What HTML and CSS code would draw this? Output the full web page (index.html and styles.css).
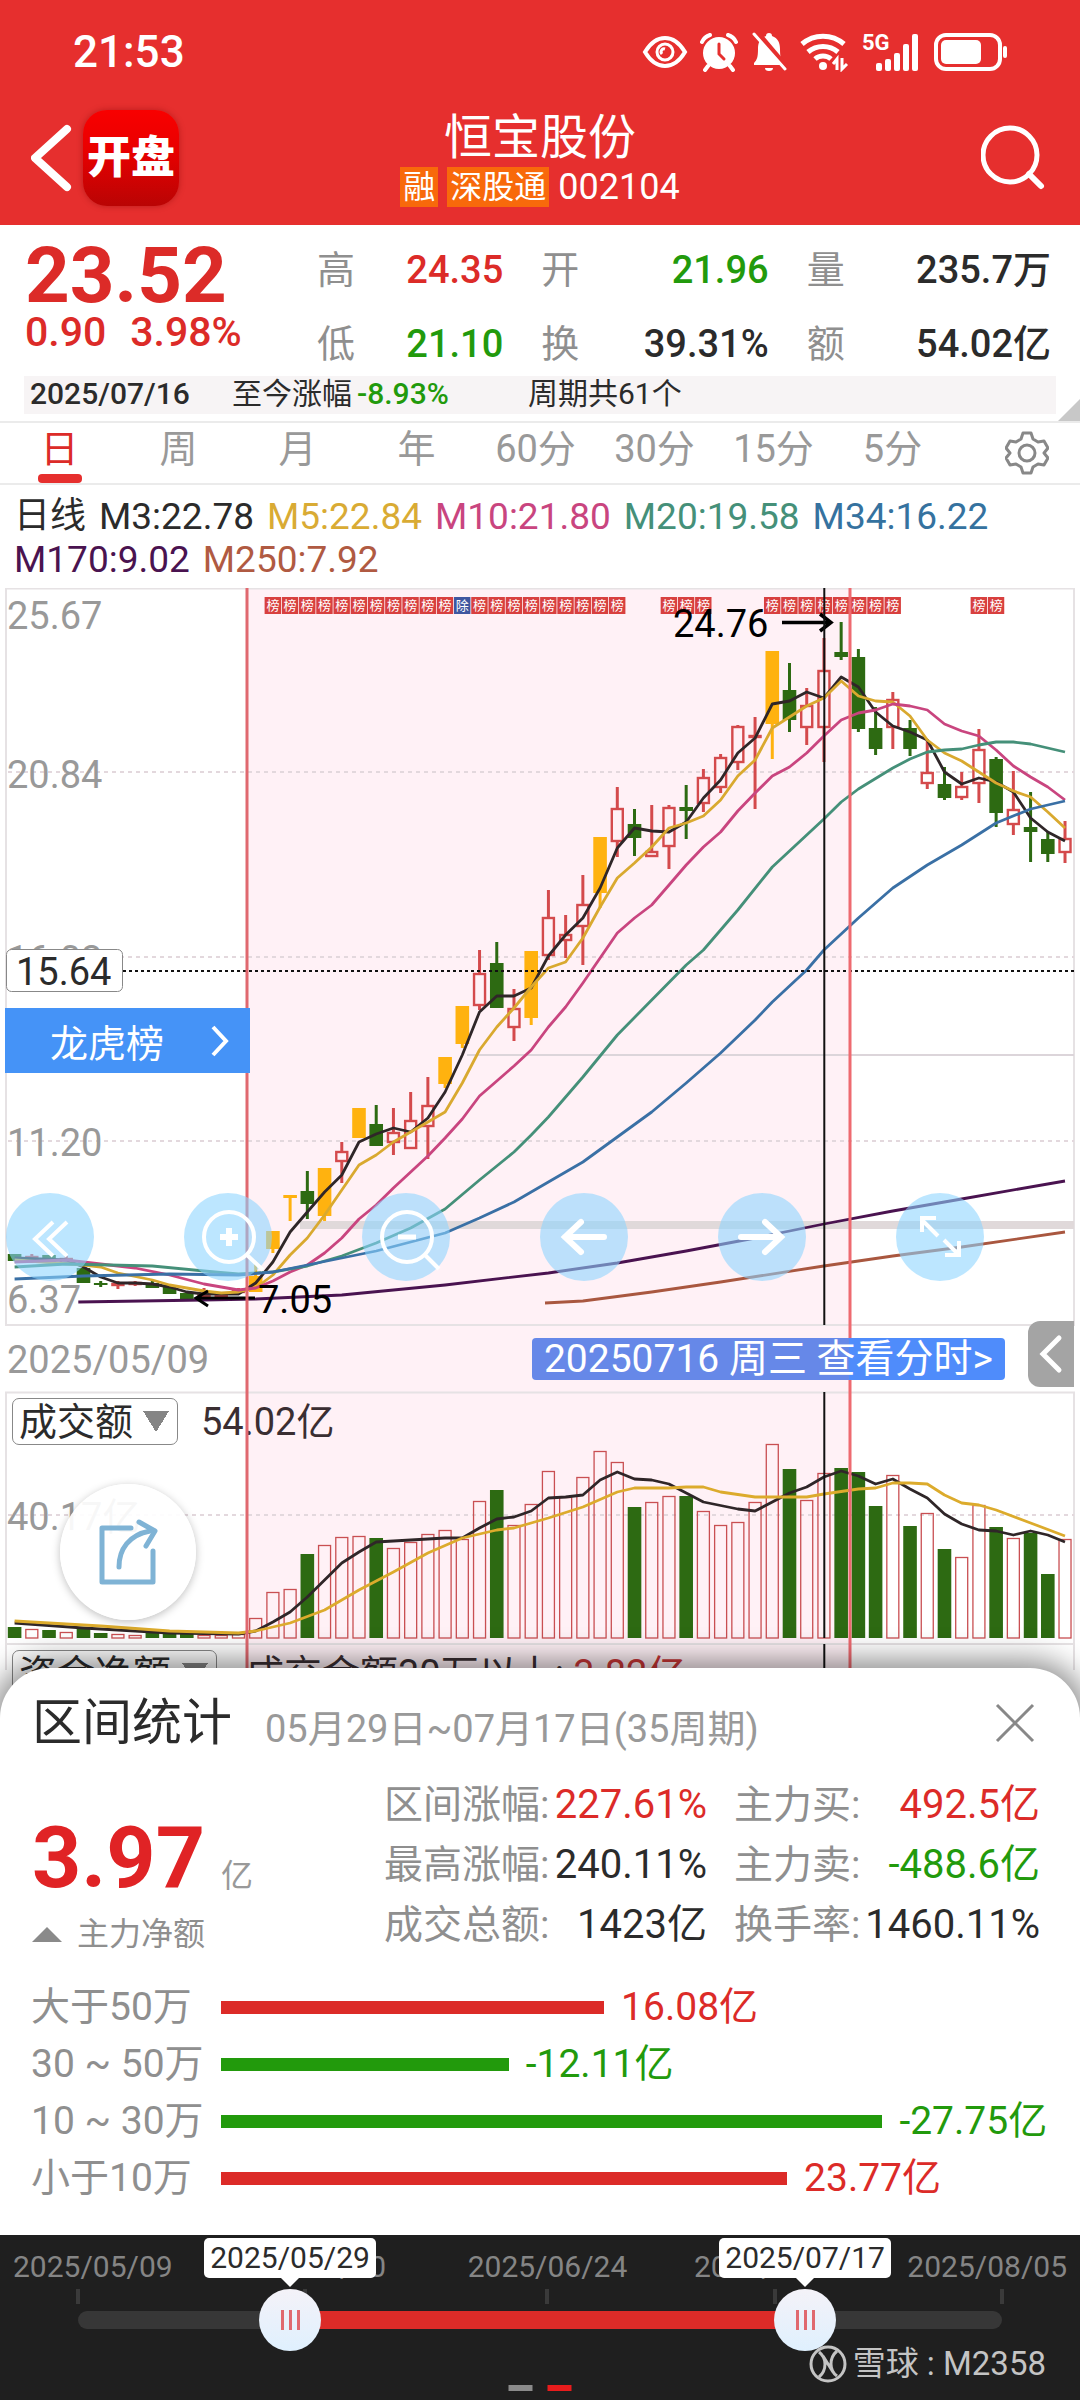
FILE: index.html
```
<!DOCTYPE html>
<html lang="zh-CN">
<head>
    <meta charset="UTF-8">
    <meta name="viewport" content="width=device-width, initial-scale=1.0">
    <title>恒宝股份 002104</title>
    <link rel="stylesheet" href="styles.css">
</head>
<body>

    <header class="header">
        <!-- Status bar -->
        <div class="status-bar">
            <span class="clock">21:53</span>
            <div class="status-icons">
                <svg width="46" height="40" viewBox="0 0 46 40" fill="none" stroke="#fff" stroke-width="4">
                    <path d="M3 20C9 10 16 6 23 6s14 4 20 14c-6 10-13 14-20 14S9 30 3 20z"/>
                    <circle cx="23" cy="20" r="8" stroke-width="3"/>
                    <path d="M23 17a3 3 0 0 0-3 5" stroke-width="3"/>
                </svg>
                <svg width="38" height="40" viewBox="0 0 38 40" fill="none" stroke="#fff" stroke-linecap="round">
                    <circle cx="19" cy="21" r="16" fill="#fff" stroke="none"/>
                    <path d="M2 10a13 13 0 0 1 8-7M36 10a13 13 0 0 0-8-7M8 34l-3 4M30 34l3 4" stroke-width="4"/>
                    <path d="M19 12v10l5 5" stroke="#e62f2e" stroke-width="3"/>
                </svg>
                <svg width="38" height="40" viewBox="0 0 38 40">
                    <path d="M19 1c2 0 3 1 3 3 6 2 8 7 8 13 0 8 1 11 4 14v2H4v-2c3-3 4-6 4-14 0-6 2-11 8-13 0-2 1-3 3-3z" fill="#fff"/>
                    <path d="M15 36h8a4 3 0 0 1-8 0z" fill="#fff"/>
                    <path d="M8 2l28 33" stroke="#e62f2e" stroke-width="6"/>
                    <path d="M4 2l31 35" stroke="#fff" stroke-width="3" stroke-linecap="round"/>
                </svg>
                <svg width="50" height="40" viewBox="0 0 50 40" fill="none" stroke="#fff" stroke-width="5">
                    <path d="M2 12a32 32 0 0 1 42 0M8 20a23 23 0 0 1 30 0M15 27a12 12 0 0 1 16 0"/>
                    <circle cx="23" cy="34" r="4" fill="#fff" stroke="none"/>
                    <path d="M37 38V27l-4 5M42 26v11l5-5" stroke-width="3"/>
                </svg>
                <svg class="signal" width="58" height="40" viewBox="0 0 58 40" fill="#fff">
                    <text class="net-label" x="0" y="18">5G</text>
                    <rect x="14" y="31" width="6" height="8" rx="2"/>
                    <rect x="23" y="27" width="6" height="12" rx="2"/>
                    <rect x="32" y="21" width="6" height="18" rx="2"/>
                    <rect x="41" y="12" width="6" height="27" rx="2"/>
                    <rect x="50" y="2" width="6" height="37" rx="2"/>
                </svg>
                <svg width="78" height="40" viewBox="0 0 78 40">
                    <rect x="4" y="3" width="64" height="34" rx="10" fill="none" stroke="#fff" stroke-width="4"/>
                    <rect x="9" y="8" width="40" height="24" rx="5" fill="#fff"/>
                    <rect x="71" y="14" width="4" height="12" rx="2" fill="#fff"/>
                </svg>
            </div>
        </div>

        <!-- Title bar -->
        <div class="nav-bar">
            <div class="nav-left">
                <button class="icon-btn" aria-label="返回">
                    <svg width="42" height="68" viewBox="4 0 42 68" fill="none" stroke="#fff" stroke-width="8" stroke-linecap="round" stroke-linejoin="round">
                        <path d="M40 5L8 34l32 29"/>
                    </svg>
                </button>
                <a href="#" class="app-logo">开盘</a>
            </div>
            <div class="nav-title">
                <h1>恒宝股份</h1>
                <p><span class="tag">融</span><span class="tag">深股通</span><span>002104</span></p>
            </div>
            <button class="icon-btn search-btn" aria-label="搜索">
                <svg width="66" height="68" viewBox="0 0 66 68" fill="none" stroke="#fff" stroke-width="5" stroke-linecap="round">
                    <circle cx="29" cy="31" r="27"/>
                    <path d="M48 50l12 12" stroke-width="6"/>
                </svg>
            </button>
        </div>
    </header>

    <!-- Quote -->
    <section class="quote">
        <div class="price-block">
            <div class="price">23.52</div>
            <div class="change"><span>0.90</span><span>3.98%</span></div>
        </div>
        <dl class="quote-grid">
            <div><dt>高</dt><dd class="up">24.35</dd></div>
            <div><dt>开</dt><dd class="down">21.96</dd></div>
            <div><dt>量</dt><dd>235.7万</dd></div>
            <div><dt>低</dt><dd class="down">21.10</dd></div>
            <div><dt>换</dt><dd>39.31%</dd></div>
            <div><dt>额</dt><dd>54.02亿</dd></div>
        </dl>
    </section>
    <div class="info-row">
        <div class="info-bar">
            <span class="info-date">2025/07/16</span>
            <span class="info-since">至今涨幅<b class="down">-8.93%</b></span>
            <span>周期共61个</span>
        </div>
        <i class="fold"></i>
    </div>

    <!-- Period tabs -->
    <nav class="tabs">
        <button class="tab active">日</button>
        <button class="tab">周</button>
        <button class="tab">月</button>
        <button class="tab">年</button>
        <button class="tab">60分</button>
        <button class="tab">30分</button>
        <button class="tab">15分</button>
        <button class="tab">5分</button>
        <button class="tab-settings" aria-label="设置">
            <svg width="44" height="44" viewBox="0 0 44 44" fill="none" stroke="#888" stroke-width="3" stroke-linejoin="round">
                <path d="M18 2h8l2 6 5 3 6-1 4 7-4 5 4 5-4 7-6-1-5 3-2 6h-8l-2-6-5-3-6 1-4-7 4-5-4-5 4-7 6 1 5-3z"/>
                <circle cx="22" cy="22" r="8"/>
            </svg>
        </button>
    </nav>

    <div class="ma-legend">
        <span class="ma-name">日线</span>
        <span class="ma3">M3:22.78</span>
        <span class="ma5">M5:22.84</span>
        <span class="ma10">M10:21.80</span>
        <span class="ma20">M20:19.58</span>
        <span class="ma34">M34:16.22</span>
        <span class="ma170">M170:9.02</span>
        <span class="ma250">M250:7.92</span>
    </div>

    <!-- Charts, the controls below float over them -->
    <section class="charts">
        <svg id="chart" class="chart-svg" viewBox="0 588 1080 1082"></svg>

        <a href="#" class="dragon-btn">
            <span>龙虎榜</span>
            <svg width="20" height="32" viewBox="0 0 20 32" fill="none" stroke="#fff" stroke-width="4"><path d="M3 2l13 14L3 30"/></svg>
        </a>

        <div class="tools">
            <button aria-label="更多"><svg viewBox="0 0 88 88"><path d="M47 29L29 46l18 17M61 29L43 46l18 17"/></svg></button>
            <button aria-label="放大"><svg viewBox="0 0 88 88"><circle cx="45" cy="44" r="25"/><path d="M63 62l16 15"/><path d="M36 44h18M45 35v18" stroke-width="6"/></svg></button>
            <button aria-label="缩小"><svg viewBox="0 0 88 88"><circle cx="45" cy="44" r="25"/><path d="M63 62l14 14"/><path d="M36 44h18" stroke-width="5"/></svg></button>
            <button aria-label="左移"><svg viewBox="0 0 88 88"><path class="bold" d="M64 44H25M41 29L25 44l16 15"/></svg></button>
            <button aria-label="右移"><svg viewBox="0 0 88 88"><path class="bold" d="M23 44h39M47 29l16 15-16 15"/></svg></button>
            <button aria-label="全屏"><svg viewBox="0 0 88 88"><path d="M42 43L26 27M26 39V25h14M48 47l14 14M49 62h14V48"/></svg></button>
        </div>

        <a href="#" class="minute-link">20250716 周三 查看分时&gt;</a>
        <button class="side-tab" aria-label="展开">
            <svg width="24" height="40" viewBox="0 0 24 40" fill="none" stroke="#fff" stroke-width="5" stroke-linecap="round"><path d="M20 4L4 20l16 16"/></svg>
        </button>

        <select class="indicator indicator-volume" aria-label="指标一"><option>成交额</option></select>
        <select class="indicator indicator-flow" aria-label="指标二"><option>资金净额</option></select>

        <button class="share-btn" aria-label="分享">
            <svg width="68" height="68" viewBox="0 0 68 68" fill="none" stroke="#7fb3d5" stroke-width="5" stroke-linecap="round" stroke-linejoin="round">
                <path d="M37 10H8v54h51V33"/>
                <path d="M25 49c0-18 10-32 31-36"/>
                <path d="M45 4l16 9-9 15"/>
            </svg>
        </button>
    </section>

    <!-- Range statistics sheet -->
    <section class="sheet">
        <div class="sheet-head">
            <h2>区间统计</h2>
            <span class="sheet-range">05月29日~07月17日(35周期)</span>
            <button class="icon-btn" aria-label="关闭">
                <svg width="40" height="40" viewBox="0 0 40 40" stroke="#888" stroke-width="3"><path d="M2 2l36 36M38 2L2 38"/></svg>
            </button>
        </div>

        <div class="summary">
            <div class="net">
                <div class="net-value"><strong>3.97</strong><span>亿</span></div>
                <div class="net-label-row"><i class="triangle"></i>主力净额</div>
            </div>
            <dl class="stats">
                <div><dt>区间涨幅:</dt><dd class="up">227.61%</dd></div>
                <div><dt>主力买:</dt><dd class="up">492.5亿</dd></div>
                <div><dt>最高涨幅:</dt><dd>240.11%</dd></div>
                <div><dt>主力卖:</dt><dd class="down">-488.6亿</dd></div>
                <div><dt>成交总额:</dt><dd>1423亿</dd></div>
                <div><dt>换手率:</dt><dd>1460.11%</dd></div>
            </dl>
        </div>

        <ul class="bars">
            <li><span class="bar-label">大于50万</span><div class="bar-row up"><i class="bar" style="width: 44.6%"></i>16.08亿</div></li>
            <li><span class="bar-label">30 ~ 50万</span><div class="bar-row down"><i class="bar" style="width: 33.5%"></i>-12.11亿</div></li>
            <li><span class="bar-label">10 ~ 30万</span><div class="bar-row down"><i class="bar" style="width: 77%"></i>-27.75亿</div></li>
            <li><span class="bar-label">小于10万</span><div class="bar-row up"><i class="bar" style="width: 65.9%"></i>23.77亿</div></li>
        </ul>
    </section>

    <!-- Range picker -->
    <footer class="picker">
        <div class="scale">
            <span>2025/05/09</span>
            <span>2025/05/30</span>
            <span>2025/06/24</span>
            <span>2025/07/15</span>
            <span>2025/08/05</span>
        </div>
        <div class="slider">
            <i class="tick" style="left: 0%"></i>
            <i class="tick" style="left: 24.6%"></i>
            <i class="tick" style="left: 50.8%"></i>
            <i class="tick" style="left: 75.4%"></i>
            <i class="tick" style="left: 100%"></i>
            <div class="track"><div class="fill" style="left: 22.95%; right: 21.31%"></div></div>
            <input type="range" min="0" max="61" value="14" aria-label="开始日期">
            <input type="range" min="0" max="61" value="48" aria-label="结束日期">
            <output class="tip" style="left: 22.95%">2025/05/29</output>
            <output class="tip" style="left: 78.69%">2025/07/17</output>
        </div>
        <div class="pager"><i></i><i class="current"></i></div>
        <div class="watermark">
            <svg width="40" height="40" viewBox="0 0 40 40" fill="none" stroke="#c4c4c4" stroke-width="3">
                <circle cx="20" cy="20" r="17"/>
                <path d="M11 8c8 6 8 18 0 25M29 7c-8 7-8 19 0 25M15 12l10 16"/>
            </svg>
            <span>雪球 : M2358</span>
        </div>
    </footer>

    <script src="chart.js"></script>
</body>
</html>
```
FILE: styles.css
```
:root {
    --red: #dc2b28;
    --header-red: #e62f2e;
    --green: #229a0c;
    --text: #2b2b2b;
    --muted: #8f8f8f;
    --line: #ebebeb;
    --font-family: Roboto, "Noto Sans CJK SC", sans-serif;
}

* {
    margin: 0;
    padding: 0;
    box-sizing: border-box;
}

body {
    background-color: #fff;
    color: var(--text);
    font-family: var(--font-family);
    font-size: 38px;
}

button,
select,
input {
    font: inherit;
    color: inherit;
    border: none;
    background: none;
    cursor: pointer;
}

a {
    text-decoration: none;
}

svg {
    display: block;
}

ul {
    list-style: none;
}

.up {
    color: var(--red);
}

.down {
    color: var(--green);
}

/* Header */
.header {
    background-color: var(--header-red);
    color: #fff;
}

.status-bar {
    display: flex;
    justify-content: space-between;
    align-items: center;
    height: 88px;
    padding: 16px 70px 0 73px;
}

.clock {
    font-size: 44px;
    font-weight: 500;
}

.status-icons {
    display: flex;
    align-items: center;
    gap: 12px;
}

.signal {
    overflow: visible;
}

.net-label {
    font-size: 22px;
    font-weight: 700;
}

.nav-bar {
    display: grid;
    grid-template-columns: 1fr auto 1fr;
    align-items: center;
    height: 137px;
    padding: 2px 33px 0;
}

.nav-left {
    display: flex;
    align-items: center;
    gap: 10px;
}

.nav-left .icon-btn {
    margin-left: -2px;
}

.app-logo {
    width: 96px;
    height: 96px;
    border-radius: 24px;
    background: linear-gradient(#f80000, #ea0000 40%, #b90404);
    box-shadow: 0 0 6px rgba(120, 0, 0, 0.4);
    color: #fff;
    font-size: 44px;
    font-weight: 900;
    line-height: 96px;
    text-align: center;
    white-space: nowrap;
}

.nav-title {
    text-align: center;
}

.nav-title h1 {
    font-size: 48px;
    font-weight: 400;
    line-height: 58px;
}

.nav-title p {
    display: flex;
    justify-content: center;
    align-items: center;
    gap: 9px;
    font-size: 36px;
    line-height: 40px;
}

.tag {
    padding: 0 3px;
    background-color: #f8690b;
    font-size: 32px;
}

.search-btn {
    justify-self: end;
}

/* Quote */
.quote {
    display: flex;
    padding: 0 29px 0 25px;
}

.price-block {
    width: 292px;
    flex: none;
    padding-top: 15px;
    color: var(--red);
}

.price {
    font-size: 78px;
    font-weight: 700;
    line-height: 72px;
}

.change {
    display: flex;
    gap: 24px;
    font-size: 41px;
    font-weight: 500;
    line-height: 40px;
}

.quote-grid {
    flex: 1;
    display: grid;
    grid-template-columns: 186fr 227fr 244fr;
    gap: 34px 38px;
    padding: 25px 0 12px;
}

.quote-grid div {
    display: flex;
    justify-content: space-between;
    line-height: 40px;
}

.quote-grid dt {
    color: var(--muted);
}

.quote-grid dd {
    font-weight: 500;
}

.info-row {
    position: relative;
    padding: 0 24px 7px;
    border-bottom: 2px solid var(--line);
}

.info-bar {
    display: flex;
    padding: 0 0 2px 6px;
    background-color: #f7f4f5;
    font-size: 30px;
    line-height: 36px;
}

.info-date {
    width: 202px;
    font-weight: 500;
}

.info-since {
    width: 296px;
}

.info-since b {
    padding-left: 5px;
    font-weight: 500;
}

.fold {
    position: absolute;
    right: 0;
    bottom: 0;
    border-left: 22px solid transparent;
    border-bottom: 22px solid #c8c8c8;
}

/* Tabs */
.tabs {
    display: grid;
    grid-template-columns: repeat(8, 119fr) 128fr;
    border-bottom: 2px solid var(--line);
}

.tab {
    position: relative;
    height: 60px;
    padding-bottom: 8px;
    color: #999;
    line-height: 50px;
}

.tab.active {
    color: var(--red);
}

.tab.active::after {
    content: '';
    position: absolute;
    left: 50%;
    bottom: 0;
    width: 44px;
    height: 9px;
    margin-left: -22px;
    border-radius: 4px;
    background-color: var(--header-red);
}

.tab-settings {
    display: flex;
    justify-content: center;
    align-items: center;
    padding-left: 22px;
}

/* Moving averages */
.ma-legend {
    display: flex;
    flex-wrap: wrap;
    column-gap: 13px;
    padding: 10px 14px 7px;
    font-size: 37px;
    line-height: 43px;
}

.ma-name { font-size: 36px; }
.ma5 { color: #d9ab34; }
.ma10 { color: #c9457f; }
.ma20 { color: #459079; }
.ma34 { color: #35729f; }
.ma170 { color: #4a1350; }
.ma250 { color: #b05a42; }

/* Charts */
.charts {
    position: relative;
}

.chart-svg {
    width: 100%;
    height: auto;
}

.chart-svg text {
    font-size: 38px;
}

.chart-svg .axis {
    fill: #999;
}

.chart-svg .badge {
    font-size: 13px;
    fill: #fff;
    text-anchor: middle;
}

.dragon-btn {
    position: absolute;
    top: 420px;
    left: 5px;
    display: flex;
    justify-content: space-between;
    align-items: center;
    width: 245px;
    height: 65px;
    padding: 0 20px 0 45px;
    background-color: #4593f7;
    color: #fff;
}

.tools {
    position: absolute;
    top: 605px;
    left: 6px;
    right: 96px;
    display: flex;
    justify-content: space-between;
}

.tools button {
    width: 88px;
    height: 88px;
    border-radius: 50%;
    background-color: rgba(140, 212, 255, 0.58);
}

.tools svg {
    fill: none;
    stroke: #fff;
    stroke-width: 4;
}

.tools .bold {
    stroke-width: 6;
    stroke-linecap: round;
}

/* Tinted up to the right edge of the selected range */
.minute-link {
    position: absolute;
    top: 750px;
    right: 75px;
    padding: 0 12px;
    border-radius: 4px;
    background: linear-gradient(90deg, #6688e8 67%, #4f8cfb 67%);
    color: #fff;
    font-size: 39px;
    line-height: 42px;
    white-space: nowrap;
}

.side-tab {
    position: absolute;
    top: 733px;
    right: 6px;
    display: flex;
    justify-content: center;
    align-items: center;
    width: 46px;
    height: 66px;
    border-radius: 12px 0 0 12px;
    background-color: #a4a4a4;
}

/* The two gradients are the halves of the down marker */
.indicator {
    position: absolute;
    left: 12px;
    height: 47px;
    padding-left: 6px;
    border: 1px solid #888;
    border-radius: 7px;
    appearance: none;
    background-image: linear-gradient(to top right, transparent 50%, #858585 50%), linear-gradient(to top left, transparent 50%, #858585 50%);
    background-repeat: no-repeat;
    background-size: 13px 21px;
    background-position: right 21px center, right 8px center;
    line-height: 44px;
}

.indicator-volume {
    top: 810px;
    width: 166px;
}

.indicator-flow {
    top: 1062px;
    width: 205px;
}

.share-btn {
    position: absolute;
    top: 896px;
    left: 60px;
    display: flex;
    justify-content: center;
    align-items: center;
    width: 136px;
    height: 136px;
    border-radius: 50%;
    background-color: rgba(255, 255, 255, 0.92);
    box-shadow: 0 2px 8px rgba(0, 0, 0, 0.25);
}

/* Sheet */
.sheet {
    position: relative;
    margin-top: -2px;
    padding: 23px 0 28px;
    border-radius: 50px 50px 0 0;
    background-color: #fff;
    box-shadow: 0 0 30px 8px rgba(0, 0, 0, 0.45);
}

.sheet-head {
    display: flex;
    align-items: center;
    height: 64px;
    padding: 0 45px 0 32px;
}

.sheet-head h2 {
    font-size: 50px;
    font-weight: 400;
    line-height: 60px;
}

.sheet-range {
    flex: 1;
    padding: 12px 0 0 33px;
    color: #999;
    line-height: 44px;
}

.summary {
    display: flex;
    justify-content: space-between;
    padding: 20px 40px 0 32px;
}

.net-value {
    display: flex;
    align-items: baseline;
    gap: 16px;
    padding-top: 45px;
    line-height: 76px;
}

.net-value strong {
    color: #e02325;
    font-size: 86px;
}

.net-value span {
    color: #999;
    font-size: 32px;
}

.net-label-row {
    display: flex;
    align-items: center;
    gap: 15px;
    color: var(--muted);
    font-size: 32px;
    line-height: 40px;
}

.triangle {
    border: 15px solid transparent;
    border-top: none;
    border-bottom-color: #8a8a8a;
}

.stats {
    display: grid;
    grid-template-columns: 323px 306px;
    column-gap: 27px;
    align-content: start;
}

.stats div {
    display: flex;
    justify-content: space-between;
    line-height: 60px;
}

.stats dt {
    color: var(--muted);
    font-size: 39px;
}

.stats dd {
    font-size: 40px;
}

.bars {
    padding: 24px 0 0 31px;
    font-size: 39px;
    line-height: 57px;
}

.bars li {
    display: flex;
    white-space: nowrap;
}

.bar-label {
    width: 190px;
    flex: none;
    color: var(--muted);
}

.bar-row {
    flex: 1;
    display: flex;
    align-items: center;
    gap: 17px;
}

.bar {
    flex: none;
    height: 13px;
    background-color: currentColor;
}

/* Picker */
.picker {
    position: relative;
    height: 165px;
    background-color: #1f1f1f;
}

.scale {
    display: grid;
    grid-template-columns: 214fr 242fr 227fr 214fr auto;
    padding: 12px 13px 0;
    color: #858585;
    font-size: 30px;
    line-height: 40px;
}

.slider {
    position: relative;
    height: 66px;
    margin: 0 78px;
}

.tick {
    position: absolute;
    top: 2px;
    width: 4px;
    height: 15px;
    margin-left: -2px;
    background-color: #3a3a3a;
}

.track {
    position: absolute;
    top: 24px;
    left: 0;
    right: 0;
    height: 18px;
    border-radius: 9px;
    background-color: #373737;
}

.fill {
    position: absolute;
    top: 0;
    bottom: 0;
    background-color: var(--red);
}

.slider input {
    position: absolute;
    top: 2px;
    left: -31px;
    width: calc(100% + 62px);
    height: 62px;
    appearance: none;
    pointer-events: none;
}

.slider input::-webkit-slider-thumb {
    width: 62px;
    height: 62px;
    border-radius: 50%;
    appearance: none;
    pointer-events: auto;
    background:
        linear-gradient(90deg, #e0696f 3px, transparent 3px 8px, #e0696f 8px 11px, transparent 11px 16px, #e0696f 16px) no-repeat center / 19px 20px,
        linear-gradient(#f4f2f8, #dff0fe);
}

.tip {
    position: absolute;
    top: -49px;
    width: 172px;
    margin-left: -86px;
    border-radius: 5px;
    background-color: #fff;
    color: #2b2b2b;
    font-size: 30px;
    line-height: 40px;
    text-align: center;
}

.tip::after {
    content: '';
    position: absolute;
    top: 100%;
    left: 50%;
    margin-left: -9px;
    border: 9px solid transparent;
    border-top-color: #fff;
    border-bottom: none;
}

.pager {
    position: absolute;
    bottom: 9px;
    left: 50%;
    display: flex;
    gap: 15px;
    transform: translateX(-50%);
}

.pager i {
    width: 24px;
    height: 6px;
    background-color: #8a8a8a;
}

.pager .current {
    background-color: #e81c1c;
}

.watermark {
    position: absolute;
    right: 34px;
    bottom: 16px;
    display: flex;
    align-items: center;
    gap: 5px;
    color: #c4c4c4;
    font-size: 33px;
    line-height: 40px;
}
```
FILE: chart.js
```
// Column centres: 62 periods across the plot
const STEP = 17.22;
const cx = i => 14.6 + STEP * i;

// [kind, high, bodyTop, bodyBottom, low, volumeTop]  r = rise, g = fall, y = limit up
const periods = [
    ['g', 1254, 1254, 1261, 1261, 1627], ['r', 1254, 1256, 1261, 1263, 1629],
    ['g', 1255, 1255, 1262, 1262, 1630], ['r', 1256, 1258, 1264, 1265, 1632],
    ['g', 1268, 1268, 1283, 1283, 1629], ['g', 1281, 1283, 1285, 1287, 1633],
    ['r', 1281, 1283, 1285, 1289, 1634], ['r', 1281, 1282, 1284, 1286, 1635],
    ['g', 1280, 1283, 1288, 1288, 1632], ['g', 1287, 1287, 1294, 1294, 1633],
    ['g', 1293, 1293, 1300, 1300, 1634], ['r', 1288, 1294, 1296, 1298, 1635],
    ['r', 1293, 1294, 1297, 1297, 1635], ['r', 1288, 1289, 1293, 1294, 1634],
    ['y', 1263, 1276, 1292, 1292, 1618], ['y', 1231, 1231, 1249, 1253, 1592],
    ['y', 1195, 1195, 1198, 1221, 1589], ['g', 1171, 1191, 1204, 1219, 1554],
    ['y', 1168, 1168, 1216, 1221, 1545], ['r', 1142, 1151, 1162, 1183, 1537],
    ['y', 1108, 1108, 1138, 1138, 1536], ['g', 1105, 1124, 1146, 1146, 1538],
    ['r', 1108, 1132, 1143, 1155, 1548], ['r', 1092, 1120, 1149, 1149, 1542],
    ['r', 1077, 1105, 1127, 1159, 1534], ['y', 1057, 1057, 1084, 1088, 1530],
    ['y', 1006, 1006, 1044, 1048, 1539], ['r', 950, 973, 1006, 1010, 1501],
    ['g', 942, 963, 1008, 1008, 1490], ['r', 989, 1008, 1028, 1041, 1525],
    ['y', 951, 951, 1018, 1025, 1504], ['r', 890, 917, 956, 960, 1471],
    ['r', 915, 934, 941, 958, 1497], ['r', 875, 904, 927, 965, 1477],
    ['y', 837, 837, 893, 908, 1451], ['r', 787, 808, 842, 857, 1462],
    ['g', 809, 824, 838, 856, 1507], ['r', 805, 851, 857, 857, 1502],
    ['r', 805, 807, 847, 869, 1496], ['g', 785, 807, 811, 839, 1496],
    ['r', 769, 777, 804, 812, 1511], ['r', 754, 757, 788, 793, 1525],
    ['r', 725, 726, 763, 770, 1522], ['r', 717, 735, 738, 809, 1502],
    ['y', 651, 651, 724, 759, 1444], ['g', 663, 690, 720, 732, 1469],
    ['r', 688, 705, 728, 745, 1500], ['r', 638, 670, 728, 762, 1473],
    ['g', 622, 652, 657, 660, 1468], ['g', 649, 657, 729, 732, 1472],
    ['g', 707, 728, 749, 755, 1506], ['r', 692, 699, 728, 749, 1475],
    ['g', 720, 728, 749, 756, 1526], ['r', 740, 772, 784, 789, 1513],
    ['g', 767, 784, 798, 800, 1549], ['r', 772, 786, 798, 800, 1557],
    ['r', 729, 749, 784, 803, 1505], ['g', 757, 759, 813, 827, 1527],
    ['r', 771, 809, 825, 835, 1538], ['g', 792, 827, 832, 862, 1533],
    ['g', 832, 839, 854, 862, 1574], ['r', 821, 838, 853, 863, 1539]
];

// Moving averages as index, y pairs
const averages = [
    ['#4a1350', [3.7, 1302, 11, 1300, 14, 1299, 19, 1295, 25, 1285, 31, 1273, 35, 1263, 39, 1251, 43, 1238, 47, 1224, 51, 1211, 55, 1199, 61, 1181]],
    ['#a9573f', [30.8, 1303, 33, 1301, 37, 1292, 41, 1282, 47, 1266, 51, 1256, 55, 1247, 61, 1232]],
    ['#2f2628', [0, 1258, 3, 1260, 4, 1267, 5, 1277, 6, 1283, 7, 1283, 8, 1284, 9, 1287, 10, 1292, 11, 1294, 13, 1294, 14, 1283, 15, 1262, 16, 1232, 17, 1212, 18, 1192, 19, 1175, 20, 1142, 21, 1134, 22, 1128, 23, 1132, 24, 1118, 25, 1092, 26, 1055, 27, 1012, 28, 996, 29, 996, 30, 988, 31, 956, 32, 935, 33, 918, 34, 888, 35, 848, 36, 828, 37, 831, 38, 832, 39, 822, 40, 798, 41, 780, 42, 753, 43, 738, 44, 704, 45, 701, 46, 692, 47, 698, 48, 677, 49, 687, 50, 712, 51, 726, 52, 732, 53, 740, 54, 772, 55, 784, 56, 778, 57, 782, 58, 792, 59, 818, 60, 832, 61, 841]],
    ['#d9a92f', [0, 1260, 4, 1265, 5, 1267, 6, 1273, 8, 1280, 9, 1285, 11, 1291, 12, 1293, 13, 1292, 14, 1288, 15, 1275, 16, 1255, 17, 1238, 18, 1215, 19, 1190, 20, 1165, 21, 1155, 22, 1142, 23, 1132, 24, 1122, 25, 1112, 26, 1083, 27, 1050, 28, 1027, 29, 1008, 30, 987, 31, 968, 32, 962, 33, 938, 34, 907, 35, 878, 36, 863, 37, 847, 38, 828, 39, 823, 40, 816, 41, 800, 42, 776, 43, 760, 44, 728, 45, 717, 46, 706, 47, 698, 48, 681, 49, 696, 50, 701, 51, 702, 52, 716, 53, 740, 54, 753, 55, 761, 56, 772, 57, 783, 58, 791, 59, 797, 60, 812, 61, 828]],
    ['#c9457f', [0, 1262, 3, 1260, 5, 1264, 7, 1268, 9, 1275, 11, 1284, 13, 1290, 14, 1288, 15, 1281, 16, 1272, 17, 1265, 18, 1253, 19, 1238, 20, 1219, 21, 1205, 22, 1188, 23, 1172, 24, 1156, 25, 1138, 26, 1119, 27, 1096, 28, 1081, 29, 1066, 30, 1050, 31, 1027, 32, 1007, 33, 983, 34, 958, 35, 933, 36, 918, 37, 905, 38, 885, 39, 865, 40, 847, 41, 832, 42, 811, 43, 793, 44, 776, 45, 767, 46, 753, 47, 736, 48, 720, 49, 713, 50, 710, 51, 704, 52, 706, 53, 710, 54, 724, 55, 731, 56, 736, 57, 750, 58, 766, 59, 777, 60, 787, 61, 800]],
    ['#459079', [0, 1267, 3, 1264, 8, 1266, 11, 1271, 13, 1274, 15, 1272, 17, 1266, 19, 1256, 21, 1243, 23, 1228, 25, 1209, 27, 1180, 28, 1166, 29, 1152, 30, 1135, 31, 1117, 33, 1077, 35, 1035, 37, 1000, 39, 965, 40, 950, 42, 910, 44, 867, 46, 835, 47, 819, 48, 802, 49, 789, 51, 768, 52, 759, 53, 752, 54, 750, 55, 749, 56, 745, 57, 742, 58, 742, 59, 744, 60, 748, 61, 752]],
    ['#3a70a5', [0, 1279, 4, 1276, 9, 1274, 13, 1275, 15, 1272, 17, 1265, 19, 1258, 21, 1251, 23, 1242, 25, 1233, 27, 1218, 29, 1202, 30, 1192, 31, 1182, 33, 1162, 35, 1137, 37, 1112, 39, 1083, 41, 1053, 43, 1020, 44, 1002, 46, 970, 47, 950, 49, 918, 51, 888, 53, 865, 55, 845, 57, 823, 59, 809, 61, 801]],
    // volume averages
    ['#2f2628', [0, 1623, 4, 1628, 9, 1633, 13, 1634, 14, 1631, 15, 1622, 16, 1612, 17, 1597, 18, 1580, 19, 1563, 20, 1552, 21, 1542, 23, 1540, 25, 1538, 26, 1538, 27, 1528, 28, 1519, 29, 1517, 30, 1511, 31, 1498, 32, 1497, 33, 1495, 34, 1480, 35, 1472, 36, 1479, 37, 1480, 38, 1484, 39, 1493, 40, 1502, 42, 1509, 43, 1511, 45, 1493, 46, 1487, 47, 1477, 48, 1471, 49, 1476, 50, 1484, 51, 1479, 52, 1489, 53, 1498, 54, 1514, 55, 1524, 56, 1530, 57, 1531, 58, 1535, 59, 1531, 60, 1535, 61, 1542]],
    ['#dcab2c', [0, 1621, 5, 1626, 9, 1631, 13, 1633, 14, 1631, 16, 1623, 18, 1610, 20, 1590, 22, 1572, 24, 1553, 26, 1538, 28, 1530, 29, 1528, 30, 1523, 31, 1518, 33, 1507, 35, 1492, 36, 1488, 38, 1488, 39, 1487, 40, 1487, 41, 1492, 43, 1497, 46, 1497, 47, 1494, 49, 1489, 50, 1488, 51, 1483, 52, 1483, 53, 1484, 54, 1495, 55, 1503, 56, 1505, 57, 1510, 59, 1523, 61, 1536]]
];

const hline = (x1, x2, y, color, extra = '') =>
    `<path d="M${x1} ${y}H${x2}" stroke="${color}" fill="none" ${extra}/>`;
const vline = (x, y1, y2, color, w) =>
    `<path d="M${x} ${y1}V${y2}" stroke="${color}" stroke-width="${w}" fill="none"/>`;
const label = (x, y, text, attrs = '') => `<text x="${x}" y="${y}" ${attrs}>${text}</text>`;

const fills = { r: '#d44a4c', g: '#2d6a12', y: '#ffb20f' };
let out = '';

// Selected range
out += '<rect x="247" y="588" width="603" height="1082" fill="#fff1f6"/>';

// Frames and grid
out += '<path d="M6 1325V588.5H1074V1325zM6 1670V1392.5H1074V1670M6 1644H1074" fill="none" stroke="#e6e2e4" stroke-width="2"/>';
[772, 957, 1141, 1515].forEach(y => {
    out += hline(8, 1074, y, '#e3d8dd', 'stroke-width="2" stroke-dasharray="4 4"');
});
out += hline(467, 1074, 1055, '#dcd5da', 'stroke-width="2"');
out += hline(300, 1074, 1225, '#e0d9da', 'stroke-width="8"');

// Axis labels
[['25.67', 629], ['20.84', 788], ['16.02', 973], ['11.20', 1156], ['6.37', 1313], ['2025/05/09', 1373], ['40.17亿', 1530]]
    .forEach(([t, y]) => { out += label(7, y, t, 'class="axis"'); });

// Badges above the candles
const badges = [];
for (let i = 15; i <= 35; i++) badges.push(i);
badges.push(38, 39, 40, 44, 45, 46, 47, 48, 49, 50, 51, 56, 57);
badges.forEach(i => {
    const x = cx(i);
    const special = i === 26;
    out += `<rect x="${x - 8.3}" y="597" width="16.4" height="17" fill="${special ? '#3f57a0' : '#d8403f'}"/>`;
    out += label(x, 610, special ? '除' : '榜', 'class="badge"');
});

// Candles and volume
periods.forEach(([kind, high, top, bottom, low, vol], i) => {
    const x = cx(i);
    const c = fills[kind];
    if (kind === 'r') {
        out += vline(x, high, top, c, 3) + vline(x, bottom, low, c, 3);
        out += `<rect x="${x - 5.5}" y="${top + 1}" width="11" height="${Math.max(bottom - top - 2, 1)}" fill="none" stroke="${c}" stroke-width="2.4"/>`;
        out += `<rect x="${x - 6}" y="${vol + .5}" width="12" height="${1637.5 - vol}" fill="none" stroke="#c94f52" stroke-width="1.3"/>`;
    } else {
        out += vline(x, high, low, c, 3);
        out += `<rect x="${x - 6.8}" y="${top}" width="13.6" height="${bottom - top}" fill="${c}"/>`;
        out += kind === 'g'
            ? `<rect x="${x - 6.8}" y="${vol}" width="13.6" height="${1638 - vol}" fill="${c}"/>`
            : `<rect x="${x - 6}" y="${vol + .5}" width="12" height="${1637.5 - vol}" fill="none" stroke="#c94f52" stroke-width="1.3"/>`;
    }
});

averages.forEach(([color, pts]) => {
    let p = '';
    for (let k = 0; k < pts.length; k += 2) p += `${cx(pts[k]).toFixed(1)},${pts[k + 1]} `;
    out += `<polyline points="${p}" fill="none" stroke="${color}" stroke-width="2.8" stroke-linejoin="round"/>`;
});

// Highest and lowest marks
out += label(673, 637, '24.76', 'fill="#000"') + label(258, 1313, '7.05', 'fill="#000"');
out += '<path d="M782 622.5H829M820 614l11 8.5-11 8.5" fill="none" stroke="#000" stroke-width="3.5"/>';
out += '<path d="M255 1298H197M208 1291l-12 7 12 8" fill="none" stroke="#000" stroke-width="3"/>';

// Cross hair
out += hline(123, 1074, 971, '#111', 'stroke-width="2" stroke-dasharray="3 3"');
out += vline(824.3, 588, 1325, '#111', 2) + vline(824.3, 1392, 1638, '#111', 2) + vline(824.3, 1644, 1670, '#111', 2);
out += '<rect x="6.5" y="949.5" width="116" height="42" rx="5" fill="#fff" stroke="#888"/>';
out += label(16, 985, '15.64', 'fill="#2b2b2b"');

// Panel values
out += label(201, 1435, '54.02亿', 'fill="#3a2e32"');
out += label(246, 1687, '成交金额30万以上: <tspan fill="#c93636">3.82亿</tspan>', 'fill="#3a2e32"');

// Range edges
out += vline(247, 588, 1670, '#e0686f', 3) + vline(850, 588, 1670, '#ee6a70', 3);

document.getElementById('chart').innerHTML = out;
```
